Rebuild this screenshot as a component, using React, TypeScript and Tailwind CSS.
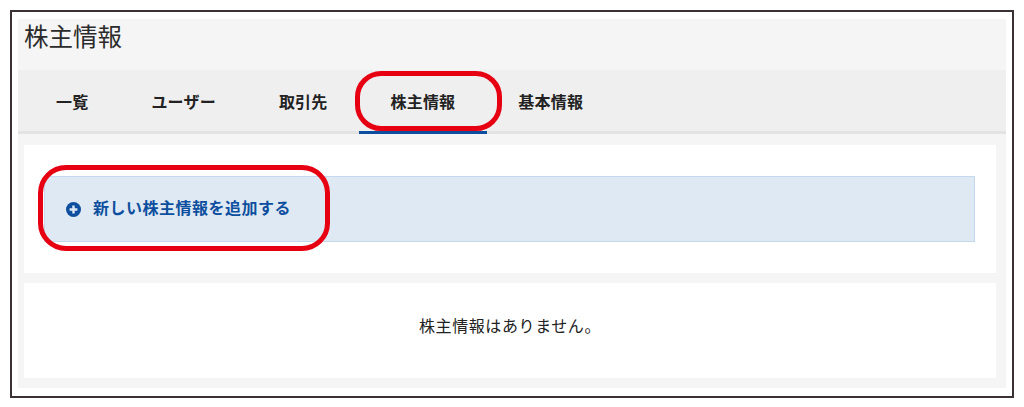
const font = { fontFamily: '"Liberation Sans", "Noto Sans CJK JP", sans-serif' }

const TABS = ["一覧", "ユーザー", "取引先", "株主情報", "基本情報"]

function PlusCircle() {
  return (
    <svg width="15" height="15" viewBox="0 0 15 15" className="shrink-0">
      <circle cx="7.5" cy="7.5" r="7.5" fill="#0d4f9e" />
      <path d="M7.5 3.6v7.8M3.6 7.5h7.8" stroke="#dfe9f4" strokeWidth="2.4" />
    </svg>
  )
}

export default function App() {
  return (
    <div className="relative h-[407px] w-[1024px] overflow-hidden bg-white pl-[10px] pt-[10px]" style={font}>
      <div className="h-[388px] w-[1004px] border-2 border-[#3a3132] bg-white pl-[6px] pr-[6px] pt-[7px]">
        <div className="h-[369px] w-[988px] bg-[#f5f5f5]">
          {/* Header */}
          <div className="h-[51px] pl-[6px] pt-[3px] text-[24.5px] leading-[31px] text-[#2b2b2b]">株主情報</div>

          {/* Tabs */}
          <div className="flex h-[64px] border-b-[3px] border-[#e3e3e3] bg-[#efefef] pl-[6.5px]">
            {TABS.map(tab => (
              <div
                key={tab}
                className={`-mb-[3px] flex h-[64px] items-center border-b-[3px] px-[31.5px] pt-[4px] text-base font-bold tracking-[0.2px] text-[#222] ${
                  tab === "株主情報" ? "border-[#0d4f9e]" : "border-transparent"
                }`}
              >
                {tab}
              </div>
            ))}
          </div>

          {/* Content */}
          <div className="flex flex-col gap-[10px] pl-[6px] pr-[10px] pt-[11px]">
            <div className="h-[128px] bg-white pl-[20px] pr-[21px] pt-[31px]">
              <div className="flex h-[66px] items-center gap-[12px] border border-[#c5d9ee] bg-[#dfe9f4] pl-[21px]">
                <PlusCircle />
                <span className="text-base font-bold tracking-[0.5px] text-[#0d4f9e]">新しい株主情報を追加する</span>
              </div>
            </div>
            <div className="flex h-[95px] items-center justify-center bg-white pb-[8px] text-base tracking-[0.6px] text-[#222]">
              株主情報はありません。
            </div>
          </div>
        </div>
      </div>

      {/* Red annotations */}
      <div className="absolute left-[355px] top-[71px] h-[60px] w-[147px] rounded-[26px] border-[5px] border-[#e60012]" />
      <div className="absolute left-[38px] top-[165px] h-[86px] w-[292px] rounded-[28px] border-[5px] border-[#e60012]" />
    </div>
  )
}
